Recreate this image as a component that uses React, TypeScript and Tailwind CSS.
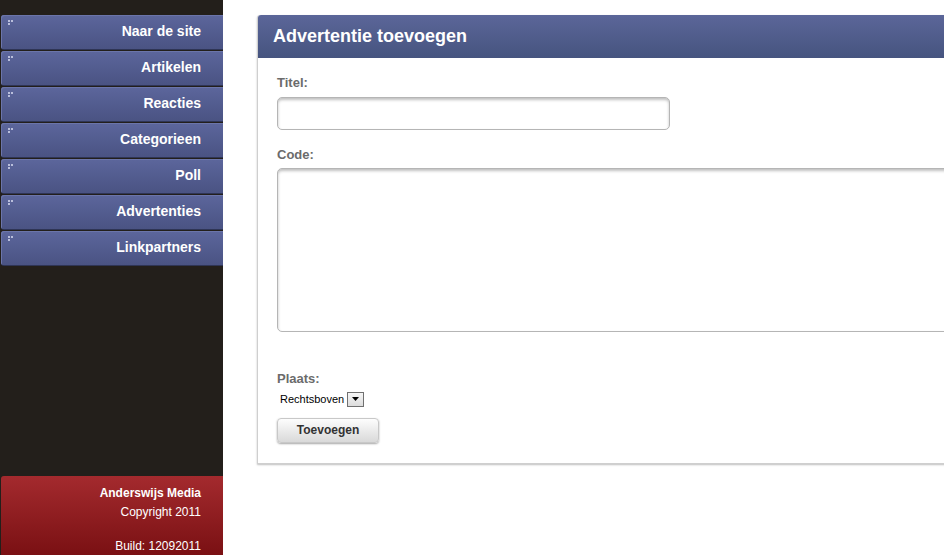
const menu = [
  "Naar de site",
  "Artikelen",
  "Reacties",
  "Categorieen",
  "Poll",
  "Advertenties",
  "Linkpartners",
];

function Grip() {
  return (
    <svg width="6" height="6" viewBox="0 0 6 6" className="absolute left-[7px] top-[5px]">
      <rect x="0" y="0" width="2" height="2" fill="#b9bedb" />
      <rect x="3" y="0" width="2" height="2" fill="#b9bedb" />
      <rect x="0" y="3" width="2" height="2" fill="#b9bedb" />
    </svg>
  );
}

export default function App() {
  return (
    <div className="flex h-[555px] w-[944px] overflow-hidden bg-white font-['Liberation_Sans',Arial,sans-serif]">
      <aside className="flex w-[223px] shrink-0 flex-col justify-between bg-[#231f1b] pt-[15px]">
        <nav className="flex flex-col gap-px">
          {menu.map((item) => (
            <a
              key={item}
              href="#"
              className="relative ml-px flex h-[35px] items-center justify-end rounded-l-[3px] border-b border-[#2f3555] bg-gradient-to-b from-[#5c669c] to-[#4a5383] pb-[2px] pr-[22px] text-[14px] font-bold text-white shadow-[inset_1px_1px_0_#6b75aa]"
            >
              <Grip />
              {item}
            </a>
          ))}
        </nav>
        <footer className="ml-px flex h-[79px] flex-col items-end rounded-tl-[3px] bg-gradient-to-b from-[#a42a2e] to-[#7a1013] pr-[22px] pt-[8px] text-[12px] leading-[19px] text-white">
          <div className="font-bold">Anderswijs Media</div>
          <div>Copyright 2011</div>
          <div className="mt-[15px]">Build: 12092011</div>
        </footer>
      </aside>

      <main className="flex-1 pl-[34px] pt-[15px]">
        <section className="w-[720px] rounded-tl-[3px] border-l border-b border-[#cfcfcf] shadow-[0_1px_2px_rgba(0,0,0,0.25)]">
          <header className="flex h-[43px] items-center rounded-tl-[3px] bg-gradient-to-b from-[#5b6699] to-[#46547f] pl-[15px] text-[18px] font-bold text-white">
            Advertentie toevoegen
          </header>
          <form className="flex flex-col pb-[20px] pl-[19px] pt-[17px]">
            <label className="text-[13px] font-bold leading-[16px] text-[#6b6b6b]">Titel:</label>
            <input
              type="text"
              className="mt-[6px] h-[33px] w-[393px] rounded-[5px] border border-[#b5b5b5] bg-white shadow-[inset_0_2px_3px_rgba(0,0,0,0.25)] outline-none"
            />
            <label className="mt-[17px] text-[13px] font-bold leading-[16px] text-[#6b6b6b]">Code:</label>
            <textarea className="mt-[5px] h-[164px] w-[720px] resize-none rounded-[5px] border border-[#b5b5b5] bg-white shadow-[inset_0_2px_3px_rgba(0,0,0,0.25)] outline-none" />
            <label className="mt-[39px] text-[13px] font-bold leading-[16px] text-[#6b6b6b]">Plaats:</label>
            <div className="mt-[4px] flex items-center pl-[3px] text-[11px] text-black">
              <span>Rechtsboven</span>
              <span className="ml-[3px] flex h-[15px] w-[17px] items-center justify-center border border-[#707070] bg-gradient-to-b from-[#f6f6f6] to-[#dcdcdc]">
                <svg width="7" height="4" viewBox="0 0 7 4">
                  <path d="M0 0h7L3.5 4z" fill="#000" />
                </svg>
              </span>
            </div>
            <button
              type="button"
              className="mt-[10px] h-[25px] w-[102px] rounded-[4px] border border-[#c8c8c8] bg-gradient-to-b from-[#fdfdfd] to-[#d9d9d9] text-[12px] font-bold text-[#333] shadow-[0_1px_2px_rgba(0,0,0,0.35)]"
            >
              Toevoegen
            </button>
          </form>
        </section>
      </main>
    </div>
  );
}
